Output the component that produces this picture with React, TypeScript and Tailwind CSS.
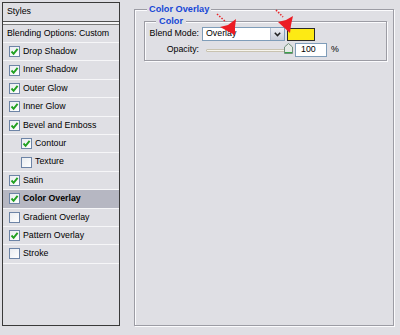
import React from 'react';

const font = { fontFamily: '"Liberation Sans", Arial, sans-serif' };

type Row = { label: string; checked: boolean; nested?: boolean; active?: boolean };

const rows: Row[] = [
  { label: 'Drop Shadow', checked: true },
  { label: 'Inner Shadow', checked: true },
  { label: 'Outer Glow', checked: true },
  { label: 'Inner Glow', checked: true },
  { label: 'Bevel and Emboss', checked: true },
  { label: 'Contour', checked: true, nested: true },
  { label: 'Texture', checked: false, nested: true },
  { label: 'Satin', checked: true },
  { label: 'Color Overlay', checked: true, active: true },
  { label: 'Gradient Overlay', checked: false },
  { label: 'Pattern Overlay', checked: true },
  { label: 'Stroke', checked: false },
];

function CheckBox({ checked }: { checked: boolean }) {
  return (
    <span className="w-[11px] h-[11px] border border-[#6d84a6] bg-gradient-to-br from-[#e9ecf0] to-white flex items-center justify-center shrink-0">
      {checked && (
        <svg width="9" height="9" viewBox="0 0 9 9">
          <path d="M1.5 4.5 L3.6 6.8 L7.6 1.8" fill="none" stroke="#21a121" strokeWidth="1.9" />
        </svg>
      )}
    </span>
  );
}

function StylesList() {
  return (
    <div className="ml-[2px] mt-[2px] w-[118px] h-[324px] border border-[#3a3a3a] bg-[#dfdfe4] flex flex-col text-[8.8px] text-black">
      <div className="h-[19px] border-b border-[#505050] flex items-center pl-[4px]">Styles</div>
      <div className="h-[2px] bg-[#f4f4f6]" />
      <div className="h-[19px] border-t border-[#7a7a7a] border-b border-b-[#f6f6f8] flex items-center pl-[4px]">
        Blending Options: Custom
      </div>
      {rows.map((r) => (
        <div
          key={r.label}
          className={`h-[18.4px] border-b border-[#f6f6f8] flex items-center gap-[3px] ${
            r.nested ? 'pl-[18px]' : 'pl-[6px]'
          } ${r.active ? 'bg-[#b6b7c2] font-bold' : ''}`}
        >
          <CheckBox checked={r.checked} />
          <span>{r.label}</span>
        </div>
      ))}
    </div>
  );
}

function Arrows() {
  return (
    <svg className="absolute left-0 top-0 pointer-events-none" width="400" height="335">
      <path d="M217 14 L226 22" stroke="#e8262a" strokeWidth="1.6" strokeDasharray="1.5 1.5" />
      <polygon points="220,27 228,25 236,19 235,27 235,35" fill="#ec1c24" />
      <path d="M276 10 L283 17" stroke="#e8262a" strokeWidth="1.6" strokeDasharray="1.5 1.5" />
      <polygon points="278,22 286,20 293,16 291,25 290,33" fill="#ec1c24" />
    </svg>
  );
}

function ColorOverlayPanel() {
  return (
    <div className="ml-[14px] mt-[9px] w-[260px] h-[317px] border border-[#9c9ca4] shadow-[inset_1px_1px_0_#fbfbfd,1px_1px_0_#fbfbfd] relative">
      <span className="absolute -top-[7px] left-[12px] px-[2px] bg-[#dfdfe4] text-[9.2px] font-bold text-[#1747d6] leading-[12px]">
        Color Overlay
      </span>
      <div className="ml-[9px] mt-[11px] w-[243px] h-[40px] border border-[#9c9ca4] shadow-[inset_1px_1px_0_#fbfbfd,1px_1px_0_#fbfbfd] relative">
        <span className="absolute -top-[7px] left-[11px] px-[3px] bg-[#dfdfe4] text-[9.2px] font-bold text-[#1747d6] leading-[12px]">
          Color
        </span>
        <div className="flex flex-col gap-[2px] pt-[5px] text-[8.8px]">
          <div className="flex items-center h-[14px]">
            <span className="w-[54px] text-right">Blend Mode:</span>
            <div className="ml-[3px] w-[83px] h-[14px] border border-[#7f9db9] bg-white flex items-center">
              <span className="flex-1 pl-[3px]">Overlay</span>
              <span className="w-[14px] h-[12px] bg-gradient-to-b from-[#eef0f5] to-[#c9cdd8] border-l border-[#b5bccb] flex items-center justify-center">
                <svg width="7" height="5" viewBox="0 0 7 5">
                  <path d="M0.8 0.8 L3.5 3.6 L6.2 0.8" fill="none" stroke="#222" strokeWidth="1.5" />
                </svg>
              </span>
            </div>
            <div className="ml-[2px] w-[28px] h-[13px] border border-[#2a2a2a] bg-[#fdea14]" />
          </div>
          <div className="flex items-center h-[14px]">
            <span className="w-[54px] text-right">Opacity:</span>
            <div className="ml-[7px] w-[84px] h-[10px] flex items-center relative">
              <div className="w-full h-[3px] border border-[#c9c3b0] bg-[#f7f5ee] rounded-[1px]" />
              <svg className="absolute right-[-3px] top-[-2px]" width="9" height="11" viewBox="0 0 9 11">
                <path d="M0.5 10.5 L0.5 4 L4.5 0.5 L8.5 4 L8.5 10.5 Z" fill="#e6eae6" stroke="#6f8f78" />
                <path d="M1 9 L8 9 L8 10 L1 10 Z" fill="#3aa54a" />
              </svg>
            </div>
            <div className="ml-[5px] w-[32px] h-[14px] border border-[#7f9db9] bg-white flex items-center pl-[5px]">100</div>
            <span className="ml-[4px]">%</span>
          </div>
        </div>
      </div>
    </div>
  );
}

export default function App() {
  return (
    <div className="w-[400px] h-[335px] bg-[#dfdfe4] flex relative overflow-hidden" style={font}>
      <StylesList />
      <ColorOverlayPanel />
      <Arrows />
    </div>
  );
}
